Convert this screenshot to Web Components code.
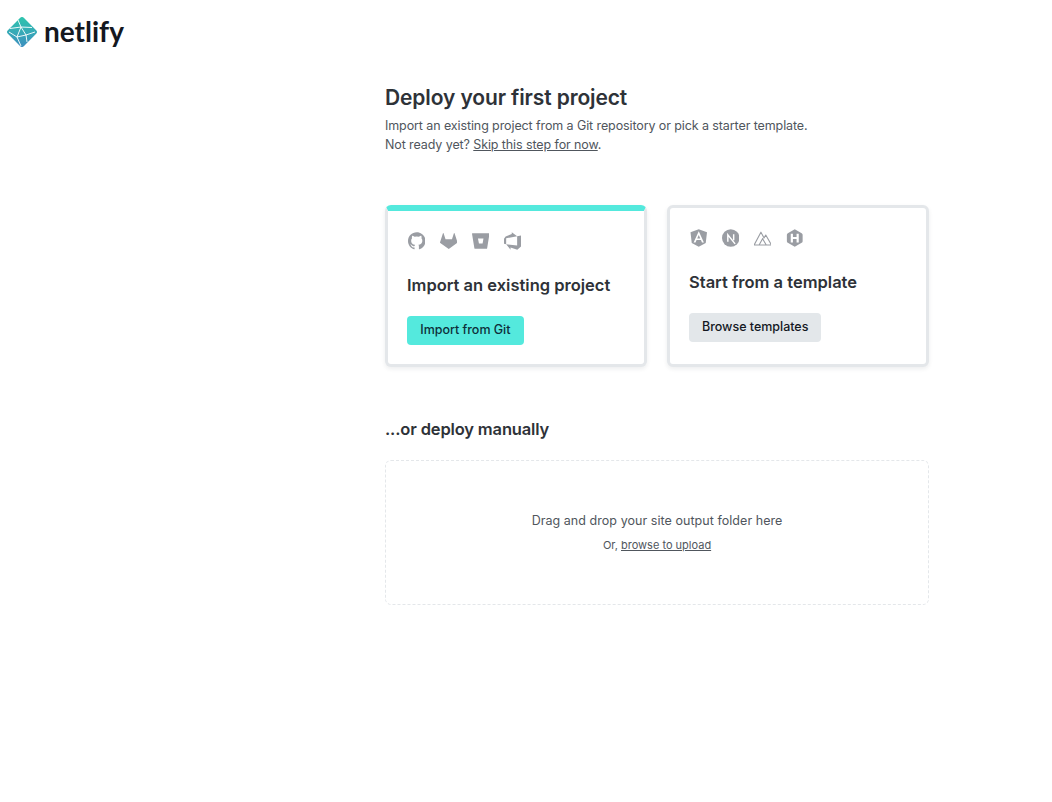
<!doctype html>
<html lang="en">
<head>
<meta charset="utf-8">
<title>Deploy your first project</title>
<style>
  html, body { margin: 0; background: #fff; }
  body { font-family: Inter, "Liberation Sans", sans-serif; color: #2e3238; }
</style>
</head>
<body>
<nf-page>
  <nf-logo slot="header"></nf-logo>
  <nf-intro></nf-intro>
  <div slot="cards">
    <nf-card accent title="Import an existing project" label="Import from Git" icons="github gitlab bitbucket azure"></nf-card>
    <nf-card title="Start from a template" label="Browse templates" icons="angular next nuxt hugo"></nf-card>
  </div>
  <nf-dropzone slot="drop"></nf-dropzone>
</nf-page>

<script>
// Brand marks for the card rows, all on a 24 unit box.
const ICONS = {
  github: '<path fill="currentColor" d="M12 0C5.37 0 0 5.37 0 12c0 5.3 3.44 9.8 8.2 11.39.6.11.82-.26.82-.58v-2.03c-3.34.73-4.04-1.61-4.04-1.61-.55-1.39-1.34-1.76-1.34-1.76-1.09-.74.08-.73.08-.73 1.2.09 1.84 1.24 1.84 1.24 1.07 1.83 2.81 1.3 3.5 1 .1-.78.42-1.31.76-1.61-2.67-.3-5.47-1.33-5.47-5.93 0-1.31.47-2.38 1.24-3.22-.14-.3-.54-1.52.1-3.18 0 0 1-.32 3.3 1.23a11.5 11.5 0 016 0c2.28-1.55 3.29-1.23 3.29-1.23.64 1.66.24 2.88.12 3.18a4.65 4.65 0 011.23 3.22c0 4.61-2.8 5.63-5.48 5.92.42.36.81 1.1.81 2.22v3.29c0 .32.19.69.8.58C20.57 21.8 24 17.3 24 12c0-6.63-5.37-12-12-12z"/>',
  gitlab: '<path fill="currentColor" d="M23.955 13.587l-1.342-4.135-2.664-8.189a.455.455 0 00-.867 0L16.418 9.45H7.582L4.919 1.263a.455.455 0 00-.867 0L1.386 9.452.044 13.587a.924.924 0 00.331 1.023L12 23.054l11.625-8.443a.92.92 0 00.33-1.024"/>',
  bitbucket: '<path fill="currentColor" fill-rule="evenodd" d="M.778 1.213a.768.768 0 00-.768.892l3.263 19.81c.084.5.515.868 1.022.873H19.95a.772.772 0 00.77-.646l3.27-20.03a.768.768 0 00-.768-.891zM14.52 15.53H9.522L8.17 8.466h7.561z"/>',
  azure: '<path fill="currentColor" d="M0 8.877L2.247 5.91l8.405-3.416V.022l7.37 5.393L2.966 8.338v8.225L0 15.707zm24-4.45v14.651l-5.753 4.9-9.303-3.057v3.056l-5.978-7.416 15.057 1.64V5.415z"/>',
  angular: '<path fill="currentColor" fill-rule="evenodd" d="M9.931 12.645h4.138l-2.07-4.908m0-7.737L.68 3.982l1.726 14.771L12 24l9.596-5.242L23.32 3.984 11.999 0zm7.064 18.31h-2.638l-1.422-3.503H8.996l-1.422 3.504h-2.64L12 2.65z"/>',
  next: '<circle cx="12" cy="12" r="12" fill="currentColor"/><path fill="none" stroke="#fff" stroke-width="2" d="M8 17V7.5L18 20M16 7v8"/>',
  nuxt: '<path fill="none" stroke="currentColor" stroke-width="1.5" stroke-linejoin="round" d="M.2 21.5L9.5 4l4.3 8 2.3-4L24 21.5zM7 21.5l5.3-9.5M16.8 21.5l-5-8.5"/>',
  hugo: '<path fill="currentColor" d="M12 0l9.5 5.5c.9.5 1.3 1.2 1.3 2.2v8.6c0 1-.4 1.7-1.3 2.2L12 24l-9.5-5.5c-.9-.5-1.3-1.2-1.3-2.2V7.7c0-1 .4-1.7 1.3-2.2z"/><path fill="none" stroke="#fff" stroke-width="3" d="M8 6v12M16 6v12M8 12h8"/>',
}

class NfPage extends HTMLElement {
  constructor() {
    super()
    this.attachShadow({ mode: 'open' }).innerHTML = `
      <style>
        :host { display: block; }
        header { height: 63px; padding-left: 7px; display: flex; align-items: flex-start; }
        main { width: 544px; margin-left: 385px; }
        .cards { margin-top: 51px; }
        ::slotted([slot=cards]) { display: grid; grid-template-columns: 262px 262px; gap: 20px; }
        h2 { margin: 52px 0 21px; font-size: 16.5px; line-height: 20px; font-weight: 600; letter-spacing: -0.15px; }
      </style>
      <header><slot name="header"></slot></header>
      <main>
        <slot></slot>
        <div class="cards"><slot name="cards"></slot></div>
        <h2>...or deploy manually</h2>
        <slot name="drop"></slot>
      </main>`
  }
}

class NfLogo extends HTMLElement {
  constructor() {
    super()
    this.attachShadow({ mode: 'open' }).innerHTML = `
      <style>
        :host { display: flex; align-items: center; gap: 7px; margin-top: 17px; }
        svg { width: 30px; height: 30px; display: block; }
        span { font: 700 28px/30px Lato, sans-serif; color: #14181f; position: relative; top: -1px; }
      </style>
      <svg viewBox="0 0 30 30" aria-hidden="true">
        <defs><linearGradient id="g" x1="0" y1="0" x2="1" y2="1">
          <stop offset="0" stop-color="#2fc7ad"/><stop offset="1" stop-color="#3d8dc0"/>
        </linearGradient></defs>
        <rect x="3.75" y="3.75" width="22.5" height="22.5" rx="2.5" fill="url(#g)" transform="rotate(45 15 15)"/>
        <path fill="none" stroke="#fff" stroke-width=".9" d="M3 11.5L14 10l11 .5M14 10l5 8 9-3M14 10l-4 10-8-5M10 20l9-2M10 20l4 9M19 18l1 7M14 10l-3-7"/>
      </svg>
      <span>netlify</span>`
  }
}

class NfIntro extends HTMLElement {
  constructor() {
    super()
    this.attachShadow({ mode: 'open' }).innerHTML = `
      <style>
        :host { display: block; }
        h1 { margin: 22px 0 5px; font-size: 21px; line-height: 26px; font-weight: 600; letter-spacing: -0.12px; }
        p { margin: 0; font-size: 12.5px; line-height: 19px; letter-spacing: -0.1px; color: #50565d; }
        a { color: inherit; }
      </style>
      <h1>Deploy your first project</h1>
      <p>Import an existing project from a Git repository or pick a starter template.<br>
      Not ready yet? <a href="#">Skip this step for now</a>.</p>`
  }
}

class NfCard extends HTMLElement {
  constructor() {
    super()
    const root = this.attachShadow({ mode: 'open' })
    const icons = this.getAttribute('icons').split(' ')
      .map(name => `<svg viewBox="0 0 24 24" aria-hidden="true">${ICONS[name]}</svg>`).join('')
    root.innerHTML = `
      <style>
        :host { display: block; height: 162px; box-sizing: border-box; background: #fff; border: 3px solid #e4e7ea; border-radius: 6px; box-shadow: 0 2px 4px rgba(30,40,50,.08); padding: 21px 19px 0; }
        :host([accent]) { border-top: 6px solid #54e9dd; }
        .icons { display: flex; gap: 14.5px; height: 18px; margin-left: .5px; color: #9a9da3; }
        svg { width: 17.5px; height: 18px; display: block; }
        h3 { margin: 24px 0 20px; font-size: 16.5px; line-height: 22px; font-weight: 600; }
        button { display: block; height: 28.5px; padding: 0 13px 1px; border: 0; border-radius: 4px; background: #e3e7ea; color: #14181f; font: 500 12.5px/27px Inter, sans-serif; letter-spacing: -0.02px; }
        :host([accent]) button { padding: 0 13.3px 1px; background: #54e9dd; color: #0e2f3a; }
      </style>
      <div class="icons">${icons}</div>
      <h3></h3>
      <button type="button"></button>`
    root.querySelector('h3').textContent = this.getAttribute('title')
    root.querySelector('button').textContent = this.getAttribute('label')
  }
}

class NfDropzone extends HTMLElement {
  constructor() {
    super()
    this.attachShadow({ mode: 'open' }).innerHTML = `
      <style>
        :host { display: flex; flex-direction: column; align-items: center; justify-content: center; height: 145px; box-sizing: border-box; padding-bottom: 2px; border: 1px dashed #e4e7ea; border-radius: 6px; color: #50565d; }
        p { margin: 0; }
        .main { font-size: 12.5px; line-height: 20px; letter-spacing: .05px; margin-bottom: 6px; }
        .sub { font-size: 11px; line-height: 16px; }
        a { color: inherit; }
      </style>
      <p class="main">Drag and drop your site output folder here</p>
      <p class="sub">Or, <a href="#">browse to upload</a></p>`
  }
}

customElements.define('nf-page', NfPage)
customElements.define('nf-logo', NfLogo)
customElements.define('nf-intro', NfIntro)
customElements.define('nf-card', NfCard)
customElements.define('nf-dropzone', NfDropzone)
</script>
</body>
</html>
